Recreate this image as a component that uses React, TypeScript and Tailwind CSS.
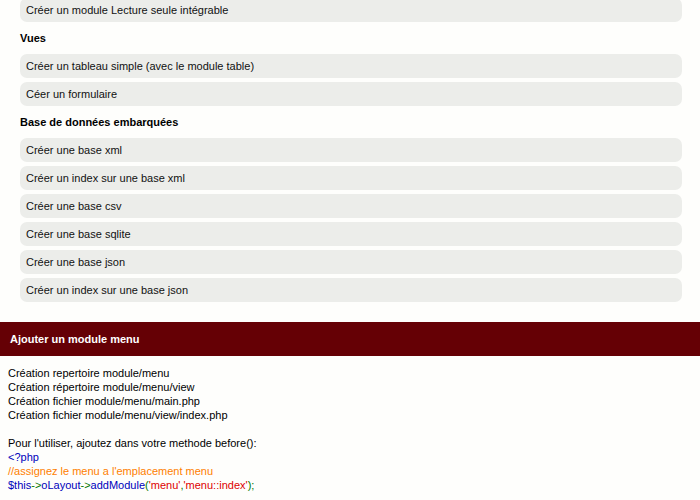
import React from "react";

const items1 = ["Créer un module Lecture seule intégrable"];
const vues = ["Créer un tableau simple (avec le module table)", "Céer un formulaire"];
const bases = [
  "Créer une base xml",
  "Créer un index sur une base xml",
  "Créer une base csv",
  "Créer une base sqlite",
  "Créer une base json",
  "Créer un index sur une base json",
];

function Item({ label }: { label: string }) {
  return (
    <div className="h-[24px] flex items-center rounded-[7px] bg-[#ecedea] pl-[6px] text-[11px] text-[#111]">
      {label}
    </div>
  );
}

function Heading({ label }: { label: string }) {
  return (
    <div className="h-[32px] flex items-center font-bold text-[11px] text-black">{label}</div>
  );
}

export default function App() {
  return (
    <div
      className="w-[700px] h-[500px] overflow-hidden bg-[#fefefc]"
      style={{ fontFamily: '"Liberation Sans", Arial, sans-serif' }}
    >
      <div className="ml-[20px] mr-[18px] -mt-[2px] flex flex-col">
        {items1.map((l) => (
          <Item key={l} label={l} />
        ))}
        <Heading label="Vues" />
        <div className="flex flex-col gap-[4px]">
          {vues.map((l) => (
            <Item key={l} label={l} />
          ))}
        </div>
        <Heading label="Base de données embarquées" />
        <div className="flex flex-col gap-[4px]">
          {bases.map((l) => (
            <Item key={l} label={l} />
          ))}
        </div>
      </div>
      <div className="mt-[20px] h-[34px] bg-[#650005] flex items-center pl-[10px] text-white font-bold text-[11px]">
        Ajouter un module menu
      </div>
      <div className="pl-[8px] pt-[10px] text-[11px] leading-[14px] text-black">
        <div>Création repertoire module/menu</div>
        <div>Création répertoire module/menu/view</div>
        <div>Création fichier module/menu/main.php</div>
        <div>Création fichier module/menu/view/index.php</div>
        <div className="h-[14px]" />
        <div>Pour l'utiliser, ajoutez dans votre methode before():</div>
        <div className="text-[#0000bb]">&lt;?php</div>
        <div className="text-[#ff8000]">//assignez le menu a l'emplacement menu</div>
        <div>
          <span className="text-[#0000bb]">$this</span>
          <span className="text-[#007700]">-&gt;</span>
          <span className="text-[#0000bb]">oLayout</span>
          <span className="text-[#007700]">-&gt;</span>
          <span className="text-[#0000bb]">addModule</span>
          <span className="text-[#007700]">(</span>
          <span className="text-[#dd0000]">'menu'</span>
          <span className="text-[#007700]">,</span>
          <span className="text-[#dd0000]">'menu::index'</span>
          <span className="text-[#007700]">);</span>
        </div>
      </div>
    </div>
  );
}
